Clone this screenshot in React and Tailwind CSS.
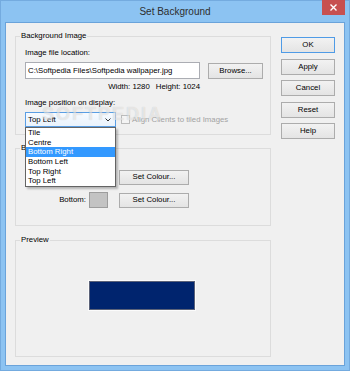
export default function App() {
  const btn =
    "flex items-center justify-center border border-[#acacac] bg-linear-to-b from-[#f2f2f2] to-[#e4e4e4] text-black";
  const items = ["Tile", "Centre", "Bottom Right", "Bottom Left", "Top Right", "Top Left"];
  return (
    <div className="w-[350px] h-[371px] bg-[#8cc3f2] border border-[#74abdf] flex flex-col px-[4px] pb-[4px] font-['Liberation_Sans',Arial,sans-serif] text-[7.8px] leading-[10px] text-black">
      <div className="relative h-[21px] flex items-center justify-center text-[10px] text-[#2e2e2e]">
        Set Background
        <div className="absolute right-0 top-[-1px] w-[23px] h-[15px] bg-[#c75050] flex items-center justify-center">
          <svg width="7" height="7" viewBox="0 0 7 7">
            <path d="M0.5 0.5 L6.5 6.5 M6.5 0.5 L0.5 6.5" stroke="#fff" strokeWidth="1.4" />
          </svg>
        </div>
      </div>
      <div className="flex-1 border border-[#6aa3da] bg-[#f0f0f0] flex pl-[9px] pt-[13px] gap-[10px]">
        <div className="w-[256px] flex flex-col">
          {/* Group 1 */}
          <div className="relative h-[99px] border border-[#dcdcdc] pl-[9px] pt-[11px]">
            <span className="absolute left-[4px] -top-[6px] px-[1px] bg-[#f0f0f0]">Background Image</span>
            <div>Image file location:</div>
            <div className="flex items-center mt-[4px]">
              <div className="w-[175px] h-[17px] border border-[#abadb3] bg-white pl-[2px] flex items-center whitespace-nowrap overflow-hidden">
                C:\Softpedia Files\Softpedia wallpaper.jpg
              </div>
              <div className={btn + " ml-[8px] w-[55px] h-[16px]"}>Browse...</div>
            </div>
            <div className="mt-[3px] w-[175px] flex justify-end gap-[6px]">
              <span>Width: 1280</span>
              <span>Height: 1024</span>
            </div>
            <div className="mt-[6px]">Image position on display:</div>
            <div className="flex items-center mt-[4px]">
              <div className="relative w-[91px] h-[15px] border border-[#5a9ee4] bg-linear-to-b from-[#f6faff] to-[#eaf3fc] flex items-center pl-[2px]">
                <span>Top Left</span>
                <svg className="absolute right-[4px] top-[5px]" width="6" height="4" viewBox="0 0 6 4">
                  <path d="M0.5 0.5 L3 3 L5.5 0.5" stroke="#333" strokeWidth="1" fill="none" />
                </svg>
                <div className="absolute left-[-1px] top-[14px] w-[91px] border border-[#646464] bg-white z-10 shadow-[2px_2px_2px_rgba(0,0,0,0.25)]">
                  {items.map((it, i) => (
                    <div
                      key={it}
                      className={
                        "h-[9.67px] leading-[9.67px] pl-[2px] whitespace-nowrap " +
                        (i === 2 ? "bg-[#3399ff] text-white" : "text-black")
                      }
                    >
                      {it}
                    </div>
                  ))}
                </div>
              </div>
              <div className="ml-[5px] w-[9px] h-[9px] border border-[#bcbcbc] bg-[#f4f4f4]" />
              <span className="ml-[2px] text-[#a3a3a3] whitespace-nowrap">Align Clients to tiled Images</span>
            </div>
            <span className="absolute left-[26px] top-[68px] text-[18px] leading-[18px] font-bold tracking-[2px] text-[rgba(255,255,255,0.55)] [text-shadow:0_0_1px_rgba(0,0,0,0.18)] pointer-events-none">
              SOFTPEDIA
            </span>
          </div>

          {/* Group 2 */}
          <div className="relative mt-[13px] h-[78px] border border-[#dcdcdc] pt-[20px]">
            <span className="absolute left-[4px] -top-[6px] px-[1px] bg-[#f0f0f0]">Background Colour</span>
            <div className="flex items-center h-[16px]">
              <span className="w-[70px] text-right">Top:</span>
              <div className="ml-[3px] w-[19px] h-[16px] border border-[#9d9d9d] bg-[#c3c3c3]" />
              <div className={btn + " ml-[11px] w-[70px] h-[15px]"}>Set Colour...</div>
            </div>
            <div className="flex items-center h-[16px] mt-[7px]">
              <span className="w-[70px] text-right">Bottom:</span>
              <div className="ml-[3px] w-[19px] h-[16px] border border-[#9d9d9d] bg-[#c3c3c3]" />
              <div className={btn + " ml-[11px] w-[70px] h-[15px]"}>Set Colour...</div>
            </div>
          </div>

          {/* Preview */}
          <div className="relative mt-[14px] h-[117px] border border-[#dcdcdc] pt-[39px] pl-[72px]">
            <span className="absolute left-[4px] -top-[6px] px-[1px] bg-[#f0f0f0]">Preview</span>
            <div className="w-[108px] h-[31px] border border-[#fbfbfb] flex">
              <div className="flex-1 border border-[#5b6278] bg-[#00246e]" />
            </div>
          </div>
        </div>

        <div className="w-[54px] mt-[1px] flex flex-col gap-[5.5px]">
          <div className={btn + " h-[16px] !border-[#4f9be6]"}>OK</div>
          <div className={btn + " h-[16px]"}>Apply</div>
          <div className={btn + " h-[16px]"}>Cancel</div>
          <div className={btn + " h-[16px]"}>Reset</div>
          <div className={btn + " h-[16px]"}>Help</div>
        </div>
      </div>
    </div>
  );
}
